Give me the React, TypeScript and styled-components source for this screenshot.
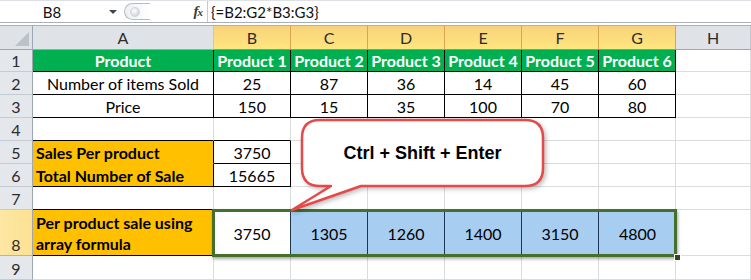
import React from 'react';
import styled, { createGlobalStyle } from 'styled-components';

const GRID = '#dadcdd';
const INK = '#000';
const GREEN = '#00b050';
const ORANGE = '#ffc000';
const BLUE = '#a7cdf0';

const GlobalStyle = createGlobalStyle`
  html, body {
    margin: 0;
    padding: 0;
    background: #fff;
  }
  body {
    font-family: Lato, "Liberation Sans", sans-serif;
    overflow: hidden;
  }
`;

const Sheet = styled.div`
  position: relative;
  width: 751px;
  height: 280px;
  overflow: hidden;
  background: #fff;
`;

const FormulaBar = styled.div`
  display: flex;
  height: 21px;
  border-top: 1px solid #dde1e6;
  border-bottom: 1px solid #a9b0b8;
  font-size: 15px;
  color: #111;
`;

const NameBox = styled.div`
  width: 122px;
  display: flex;
  align-items: center;
`;

const NameText = styled.span`
  width: 104px;
  text-align: center;
`;

const DropArrow = styled.span`
  margin-left: 5px;
  border-top: 4px solid #444;
  border-left: 4px solid transparent;
  border-right: 4px solid transparent;
`;

const Tools = styled.div`
  width: 86px;
  display: flex;
  align-items: center;
  justify-content: space-between;
  padding-right: 5px;
  box-sizing: border-box;
  border-right: 1px solid #c4c9cf;
`;

const Grip = styled.span`
  margin-left: 2px;
  width: 26px;
  height: 17px;
  box-sizing: border-box;
  display: flex;
  align-items: center;
  padding-left: 5px;
  border: 1px solid #b6bcc4;
  border-right: none;
  border-radius: 10px 0 0 10px;
  background: linear-gradient(90deg, #eef0f2, #ffffff);
`;

const GripDot = styled.span`
  width: 8px;
  height: 8px;
  border-radius: 50%;
  background: radial-gradient(circle at 40% 35%, #ffffff, #c2c7cd);
  border: 1px solid #cfd3d8;
`;

const Fx = styled.span`
  font-family: "Liberation Serif", serif;
  font-style: italic;
  font-weight: 700;
  font-size: 15px;
  color: #3a3a3a;
  letter-spacing: -1px;

  small {
    font-size: 11px;
  }
`;

const FormulaText = styled.div`
  display: flex;
  align-items: center;
  padding-left: 3px;
  font-size: 15px;
`;

const Gap = styled.div`
  height: 2px;
  border-bottom: 1px solid #a9b0b8;
`;

const Row = styled.div<{ $h: number }>`
  display: grid;
  grid-template-columns: 33px 181px repeat(6, 77px) 1fr;
  height: ${p => p.$h}px;
  font-size: 16px;
`;

const Corner = styled.div`
  position: relative;
  box-sizing: border-box;
  background: #dfe3e8;
  border-right: 1px solid #9ea7b1;
  border-bottom: 1px solid #9ea7b1;

  &::after {
    content: '';
    position: absolute;
    right: 3px;
    bottom: 3px;
    border-left: 14px solid transparent;
    border-bottom: 14px solid #bcc1c7;
  }
`;

const ColHead = styled.div<{ $active?: boolean }>`
  box-sizing: border-box;
  display: flex;
  align-items: center;
  justify-content: center;
  color: #2c2c2c;
  background: ${p => (p.$active ? 'linear-gradient(#f8d27a, #ffe680)' : '#dfe3e8')};
  border-right: 1px solid ${p => (p.$active ? '#d9a548' : '#c3c8ce')};
  border-bottom: 1px solid ${p => (p.$active ? '#c48a2c' : '#9ea7b1')};
`;

const RowHead = styled.div<{ $active?: boolean }>`
  box-sizing: border-box;
  display: flex;
  align-items: flex-end;
  justify-content: center;
  padding-bottom: 1px;
  color: #2c2c2c;
  background: ${p => (p.$active ? 'linear-gradient(90deg, #fde7a4, #fde194)' : '#e4e7ec')};
  border-right: 1px solid #9ea7b1;
  border-bottom: 1px solid ${p => (p.$active ? '#dfae59' : '#c5cbd3')};
`;

const Cell = styled.div<{ $fill?: string; $bold?: boolean; $left?: boolean; $r?: string; $b?: string; $color?: string }>`
  box-sizing: border-box;
  display: flex;
  align-items: center;
  justify-content: ${p => (p.$left ? 'flex-start' : 'center')};
  padding: 0 3px;
  background: ${p => p.$fill || '#fff'};
  border-right: 1px solid ${p => p.$r || GRID};
  border-bottom: 1px solid ${p => p.$b || GRID};
  color: ${p => p.$color || INK};
  font-weight: ${p => (p.$bold ? 700 : 400)};
  white-space: nowrap;
`;

const WrapCell = styled(Cell)`
  align-items: flex-end;
  white-space: normal;
  line-height: 21px;
  padding-bottom: 1px;
`;

const Selection = styled.div`
  grid-column: 3 / 9;
  display: grid;
  grid-template-columns: repeat(6, 1fr);
  position: relative;
  z-index: 1;

  &::after {
    content: '';
    position: absolute;
    inset: -1px -1px -1px -2px;
    border: 3px solid #44702b;
    box-shadow: 1px 2px 3px rgba(0, 0, 0, 0.35);
    pointer-events: none;
  }
`;

const SelCell = styled.div<{ $current?: boolean; $last?: boolean }>`
  display: flex;
  align-items: center;
  justify-content: center;
  background: ${p => (p.$current ? '#fff' : BLUE)};
  border-right: ${p => (p.$last ? 'none' : '1px solid #1f3556')};
`;

const FillHandle = styled.span`
  position: absolute;
  right: -5px;
  bottom: -5px;
  width: 5px;
  height: 5px;
  background: #2d4a1b;
  border: 1px solid #fff;
  z-index: 2;
`;

const Callout = styled.div`
  position: absolute;
  left: 290px;
  top: 116px;
  width: 266px;
  height: 100px;
  z-index: 3;

  svg {
    position: absolute;
    inset: 0;
    filter: drop-shadow(2px 2px 2px rgba(0, 0, 0, 0.25));
  }
`;

const CalloutLabel = styled.div`
  position: relative;
  margin: 4px 0 0 12px;
  width: 241px;
  height: 66px;
  display: flex;
  align-items: center;
  justify-content: center;
  font-family: "Liberation Sans", Arial, sans-serif;
  font-weight: 700;
  font-size: 18px;
  color: #000;
`;

const columns = ['A', 'B', 'C', 'D', 'E', 'F', 'G', 'H'];
const products = ['Product 1', 'Product 2', 'Product 3', 'Product 4', 'Product 5', 'Product 6'];
const sold = [25, 87, 36, 14, 45, 60];
const price = [150, 15, 35, 100, 70, 80];
const sales = [3750, 1305, 1260, 1400, 3150, 4800];

const Blank: React.FC<{ b?: string; r?: string }> = ({ b, r }) => <Cell $b={b} $r={r} />;

const App: React.FC = () => {
  return (
    <Sheet>
      <GlobalStyle />
      <FormulaBar>
        <NameBox>
          <NameText>B8</NameText>
          <DropArrow />
        </NameBox>
        <Tools>
          <Grip>
            <GripDot />
          </Grip>
          <Fx>f<small>x</small></Fx>
        </Tools>
        <FormulaText>{'{=B2:G2*B3:G3}'}</FormulaText>
      </FormulaBar>
      <Gap />

      <Row $h={24}>
        <Corner />
        {columns.map(c => (
          <ColHead key={c} $active={c !== 'A' && c !== 'H'}>{c}</ColHead>
        ))}
      </Row>

      <Row $h={22}>
        <RowHead>1</RowHead>
        <Cell $fill={GREEN} $bold $color="#fff" $r={INK} $b={INK}>Product</Cell>
        {products.map(p => (
          <Cell key={p} $fill={GREEN} $bold $color="#fff" $r={INK} $b={INK}>{p}</Cell>
        ))}
        <Blank />
      </Row>

      <Row $h={23}>
        <RowHead>2</RowHead>
        <Cell $r={INK} $b={INK}>Number of items Sold</Cell>
        {sold.map((v, i) => (
          <Cell key={i} $r={INK} $b={INK}>{v}</Cell>
        ))}
        <Blank />
      </Row>

      <Row $h={23}>
        <RowHead>3</RowHead>
        <Cell $r={INK} $b={INK}>Price</Cell>
        {price.map((v, i) => (
          <Cell key={i} $r={INK} $b={INK}>{v}</Cell>
        ))}
        <Blank />
      </Row>

      <Row $h={23}>
        <RowHead>4</RowHead>
        <Blank b={INK} />
        <Blank b={INK} />
        {[0, 1, 2, 3, 4, 5].map(i => <Blank key={i} />)}
      </Row>

      <Row $h={23}>
        <RowHead>5</RowHead>
        <Cell $fill={ORANGE} $bold $left $r={INK} $b={ORANGE}>Sales Per product</Cell>
        <Cell $r={INK} $b={INK}>3750</Cell>
        {[0, 1, 2, 3, 4, 5].map(i => <Blank key={i} />)}
      </Row>

      <Row $h={23}>
        <RowHead>6</RowHead>
        <Cell $fill={ORANGE} $bold $left $r={INK} $b={INK}>Total Number of Sale</Cell>
        <Cell $r={INK} $b={INK}>15665</Cell>
        {[0, 1, 2, 3, 4, 5].map(i => <Blank key={i} />)}
      </Row>

      <Row $h={23}>
        <RowHead>7</RowHead>
        <Blank b={INK} />
        {[0, 1, 2, 3, 4, 5, 6].map(i => <Blank key={i} />)}
      </Row>

      <Row $h={46}>
        <RowHead $active>8</RowHead>
        <WrapCell $fill={ORANGE} $bold $left $r={INK} $b={INK}>Per product sale using array formula</WrapCell>
        <Selection>
          {sales.map((v, i) => (
            <SelCell key={i} $current={i === 0} $last={i === sales.length - 1}>{v}</SelCell>
          ))}
          <FillHandle />
        </Selection>
        <Blank />
      </Row>

      <Row $h={24}>
        <RowHead>9</RowHead>
        {[0, 1, 2, 3, 4, 5, 6, 7].map(i => <Blank key={i} />)}
      </Row>

      <Callout>
        <svg width="266" height="100" viewBox="0 0 266 100">
          <path
            d="M30 4 H235 Q253 4 253 22 V52 Q253 70 235 70 H71 L2 94 L41 70 H30 Q12 70 12 52 V22 Q12 4 30 4 Z"
            fill="#fff"
            stroke="#e5494a"
            strokeWidth="2.5"
            strokeLinejoin="round"
          />
        </svg>
        <CalloutLabel>Ctrl + Shift + Enter</CalloutLabel>
      </Callout>
    </Sheet>
  );
};

export default App;
